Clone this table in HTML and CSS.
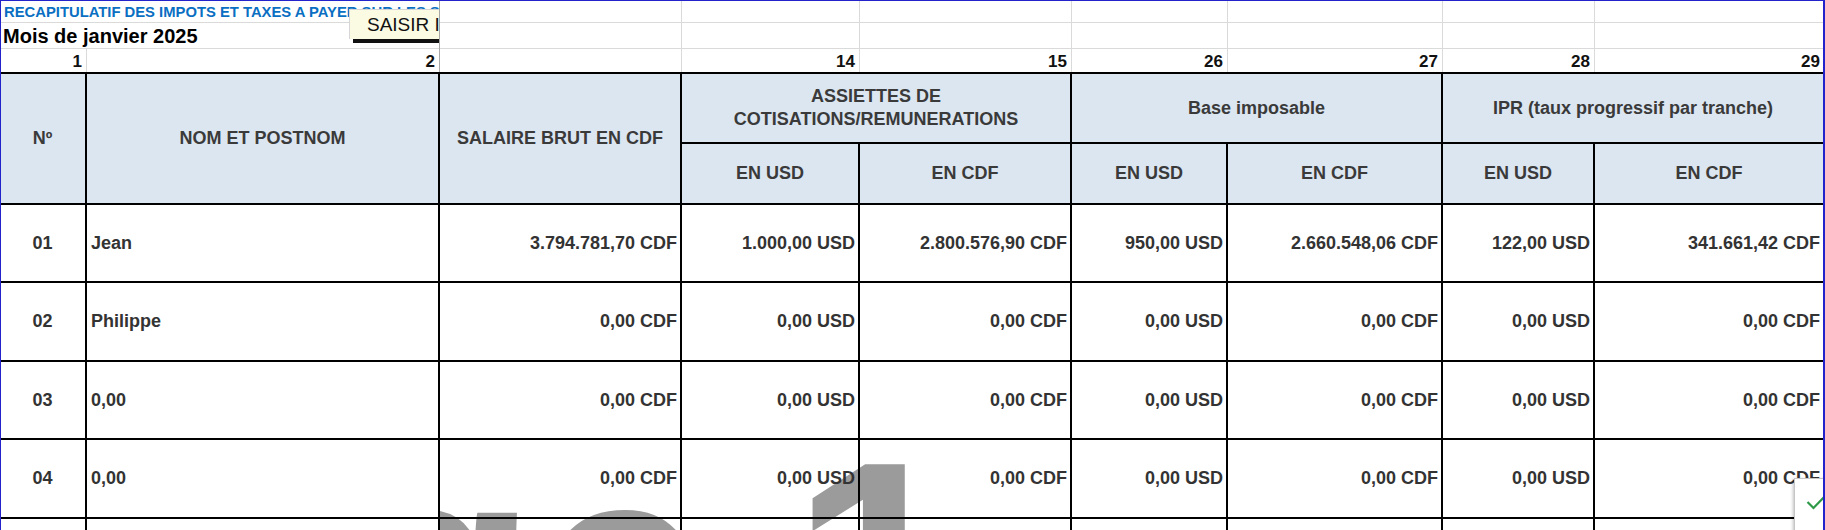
FILE: index.html
```html
<!DOCTYPE html>
<html lang="fr">
<head>
<meta charset="utf-8">
<title>Récapitulatif des impôts</title>
<link rel="stylesheet" href="styles.css">
</head>
<body>
<div class="sheet">
  <div class="top">
    <div class="pane-left">
      <div class="trow t1"><span class="title">RECAPITULATIF DES IMPOTS ET TAXES A PAYER SUR LES SALAIRES</span></div>
      <div class="trow t2"><span class="month">Mois de janvier 2025</span></div>
      <div class="trow t3"><div class="num n1">1</div><div class="num n2">2</div></div>
      <div class="saisir">SAISIR IMPOTS</div>
    </div>
    <div class="pane-right">
      <div class="g"></div><div class="g"></div><div class="g"></div><div class="g"></div><div class="g"></div><div class="g"></div><div class="g"></div>
      <div class="g"></div><div class="g"></div><div class="g"></div><div class="g"></div><div class="g"></div><div class="g"></div><div class="g"></div>
      <div class="g num"></div><div class="g num">14</div><div class="g num">15</div><div class="g num">26</div><div class="g num">27</div><div class="g num">28</div><div class="g num">29</div>
    </div>
  </div>

  <div class="grid">
    <div class="h span2">Nº</div>
    <div class="h span2">NOM ET POSTNOM</div>
    <div class="h span2">SALAIRE BRUT EN CDF</div>
    <div class="h group">ASSIETTES DE<br>COTISATIONS/REMUNERATIONS</div>
    <div class="h group">Base imposable</div>
    <div class="h group">IPR (taux progressif par tranche)</div>
    <div class="h">EN USD</div><div class="h">EN CDF</div>
    <div class="h">EN USD</div><div class="h">EN CDF</div>
    <div class="h">EN USD</div><div class="h">EN CDF</div>

    <div class="d c">01</div><div class="d l">Jean</div>
    <div class="d r">3.794.781,70 CDF</div><div class="d r">1.000,00 USD</div><div class="d r">2.800.576,90 CDF</div>
    <div class="d r">950,00 USD</div><div class="d r">2.660.548,06 CDF</div><div class="d r">122,00 USD</div><div class="d r">341.661,42 CDF</div>

    <div class="d c">02</div><div class="d l">Philippe</div>
    <div class="d r">0,00 CDF</div><div class="d r">0,00 USD</div><div class="d r">0,00 CDF</div>
    <div class="d r">0,00 USD</div><div class="d r">0,00 CDF</div><div class="d r">0,00 USD</div><div class="d r">0,00 CDF</div>

    <div class="d c">03</div><div class="d l">0,00</div>
    <div class="d r">0,00 CDF</div><div class="d r">0,00 USD</div><div class="d r">0,00 CDF</div>
    <div class="d r">0,00 USD</div><div class="d r">0,00 CDF</div><div class="d r">0,00 USD</div><div class="d r">0,00 CDF</div>

    <div class="d c">04</div><div class="d l">0,00</div>
    <div class="d r">0,00 CDF</div><div class="d r">0,00 USD</div><div class="d r">0,00 CDF</div>
    <div class="d r">0,00 USD</div><div class="d r">0,00 CDF</div><div class="d r">0,00 USD</div><div class="d r">0,00 CDF</div>

    <div class="d c"></div><div class="d l"></div>
    <div class="d r"></div><div class="d r"></div><div class="d r"></div>
    <div class="d r"></div><div class="d r"></div><div class="d r"></div><div class="d r"></div>
  </div>

  <div class="watermark"><span>Page 1</span></div>

  <div class="check">
    <svg width="22" height="17" viewBox="0 0 22 17"><path d="M1.5 9 L7.5 15 L20.5 1.5" fill="none" stroke="#2e9a48" stroke-width="2.2"/></svg>
  </div>
  <div class="frame"></div>
</div>
</body>
</html>
```

FILE: styles.css
```css
html, body {
  margin: 0;
  padding: 0;
  background: #ffffff;
}

.sheet {
  position: relative;
  width: 1825px;
  height: 530px;
  overflow: hidden;
  font-family: "Liberation Sans", Arial, sans-serif;
  background: #ffffff;
}

/* ---------- top rows ---------- */
.top {
  display: flex;
  height: 72px;
}

.pane-left {
  position: relative;
  width: 440px;
  flex: none;
  overflow: hidden;
  box-sizing: border-box;
  border-right: 1px solid #a8a8a8;
}

.trow {
  box-sizing: border-box;
  white-space: nowrap;
}

.t1 {
  height: 23px;
  border-bottom: 1px solid #dadada;
  padding-left: 4px;
  line-height: 23px;
}

.t2 {
  height: 26px;
  border-bottom: 1px solid #dadada;
  padding-left: 3px;
  line-height: 26px;
}

.t3 {
  height: 23px;
  display: flex;
}

.title {
  font-size: 14.8px;
  font-weight: bold;
  color: #0a6fc2;
}

.month {
  font-size: 20px;
  font-weight: bold;
  color: #000;
}

.num {
  box-sizing: border-box;
  font-size: 17px;
  font-weight: bold;
  color: #111;
  text-align: right;
  padding-right: 4px;
  display: flex;
  align-items: flex-end;
  justify-content: flex-end;
}

.n1 {
  width: 87px;
  border-right: 1px solid #dadada;
}

.n2 {
  width: 352px;
}

.saisir {
  position: absolute;
  left: 349px;
  top: 9px;
  width: 140px;
  height: 30px;
  box-sizing: border-box;
  background: #fbfbe3;
  border-top: 1px solid #d6d6d6;
  border-left: 1px solid #d6d6d6;
  box-shadow: 4px 4px 0 #111;
  font-size: 19px;
  line-height: 29px;
  padding-left: 17px;
  color: #111;
  white-space: nowrap;
}

.pane-right {
  flex: 1;
  display: grid;
  grid-template-columns: 242px 178px 212px 156px 215px 152px 229px;
  grid-template-rows: 23px 26px 23px;
}

.g {
  box-sizing: border-box;
  border-right: 1px solid #dadada;
  border-bottom: 1px solid #dadada;
}

.pane-right .num {
  border-bottom: none;
}

.pane-right .g:nth-child(7n) {
  border-right: none;
}

/* ---------- table ---------- */
.grid {
  position: relative;
  z-index: 1;
  display: grid;
  grid-template-columns: 87px 353px 242px 178px 212px 156px 215px 152px 230px;
  grid-template-rows: 70px 61px 78px 79px 78px 79px 79px;
  border-top: 2px solid #000;
}

.h, .d {
  box-sizing: border-box;
  border-right: 2px solid #000;
  border-bottom: 2px solid #000;
  display: flex;
  align-items: center;
  font-weight: bold;
}

.h {
  background: #dce6f1;
  color: #3a3a3a;
  font-size: 18px;
  line-height: 23px;
  justify-content: center;
  text-align: center;
}

.span2 {
  grid-row: span 2;
}

.group {
  grid-column: span 2;
}

.d {
  color: #333;
  font-size: 18px;
  white-space: nowrap;
}

.d.c {
  justify-content: center;
}

.d.l {
  padding-left: 4px;
}

.d.r {
  justify-content: flex-end;
  padding-right: 3px;
}

/* ---------- overlays ---------- */
.watermark {
  position: absolute;
  left: 440px;
  top: 0;
  right: 0;
  bottom: 0;
  overflow: hidden;
  z-index: 0;
}

.watermark span {
  position: absolute;
  left: -462px;
  top: 416px;
  font-size: 305px;
  line-height: 1;
  font-weight: bold;
  color: #9b9b9b;
  white-space: nowrap;
}

.check {
  position: absolute;
  left: 1794px;
  top: 478px;
  width: 44px;
  height: 60px;
  z-index: 3;
  background: #fff;
  border: 1px solid #c6c6c6;
  box-shadow: -1px 1px 3px rgba(0,0,0,0.25);
  display: flex;
  align-items: flex-start;
  padding: 14px 0 0 11px;
  box-sizing: border-box;
}

.frame {
  position: absolute;
  inset: 0;
  z-index: 4;
  border-top: 1px solid #2323cc;
  border-left: 1px solid #2323cc;
  border-right: 2px solid #2323cc;
  pointer-events: none;
}
```
